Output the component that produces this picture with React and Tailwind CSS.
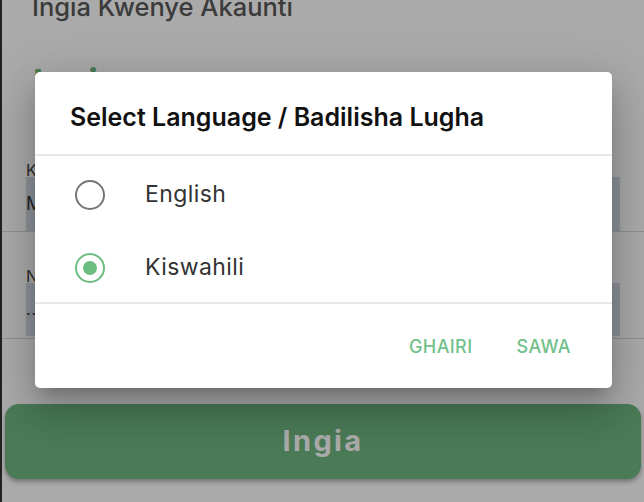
import React from "react";

const font = { fontFamily: "Inter, 'Noto Sans', sans-serif" };

function Radio({ checked }) {
  return checked ? (
    <div className="w-[30px] h-[30px] rounded-full border-[2.5px] border-[#6cbb80] flex items-center justify-center shrink-0">
      <div className="w-[14px] h-[14px] rounded-full bg-[#6cbb80]" />
    </div>
  ) : (
    <div className="w-[30px] h-[30px] rounded-full border-[2.5px] border-[#767676] shrink-0" />
  );
}

export default function App() {
  return (
    <div
      className="relative w-[644px] h-[502px] overflow-hidden flex bg-white"
      style={font}
    >
      <div className="w-[2px] bg-[#333] shrink-0" />
      <div className="flex-1 flex flex-col">
        <div className="mt-[-6px] pl-[30px] text-[25.5px] leading-none font-medium text-[#595959] whitespace-nowrap">
          Ingia Kwenye Akaunti
        </div>
        <div className="mt-[44px] pl-[31px] text-[36px] leading-none font-bold text-[#70b781]">
          Ingia
        </div>

        <div className="mt-[63px] pl-[24px] text-[16px] leading-[14px] text-[#444]">
          Kitambulisho
        </div>
        <div className="mx-[24px] h-[54px] bg-[#d6dde9] flex items-center text-[18px] text-[#333]">
          Mtumiaji01
        </div>
        <div className="h-[1px] bg-[#d8d8d8]" />

        <div className="mt-[37px] pl-[24px] text-[16px] leading-[14px] text-[#444]">
          Nenosiri
        </div>
        <div className="mx-[24px] h-[53px] bg-[#d6dde9] flex items-center text-[16px] text-[#333] tracking-[1px]">
          ..........
        </div>
        <div className="mt-[2px] h-[1px] bg-[#d8d8d8]" />

        <button className="mt-[65px] ml-[3px] mr-[3px] h-[75px] rounded-[14px] bg-[#70b781] shadow-[0_3px_4px_rgba(0,0,0,0.3)] flex items-center justify-center text-white text-[29px] font-bold tracking-[2.4px]">
          Ingia
        </button>
      </div>

      <div className="absolute inset-0 bg-[rgba(0,0,0,0.333)]" />

      <div className="absolute left-[35px] top-[72px] w-[577px] h-[316px] rounded-[5px] bg-white flex flex-col shadow-[0_11px_15px_-7px_rgba(0,0,0,0.2),0_24px_38px_3px_rgba(0,0,0,0.14),0_9px_46px_8px_rgba(0,0,0,0.12)]">
        <div className="h-[84px] shrink-0 flex items-center pl-[35px] pt-[9px] border-b-2 border-[#e8e8e8] text-[25px] font-semibold text-[#111] whitespace-nowrap">
          Select Language / Badilisha Lugha
        </div>
        <div className="flex flex-col">
          <div className="h-[73px] flex items-center pl-[40px] pt-[4px]">
            <Radio checked={false} />
            <span className="ml-[40px] text-[23px] tracking-[0.4px] text-[#333]">English</span>
          </div>
          <div className="h-[73px] flex items-center pl-[40px] pt-[4px]">
            <Radio checked />
            <span className="ml-[40px] text-[23px] tracking-[0.4px] text-[#333]">Kiswahili</span>
          </div>
        </div>
        <div className="flex-1 border-t-2 border-[#e8e8e8] flex items-center justify-end gap-[44px] pr-[41px] text-[18px] font-medium tracking-[0.4px] text-[#72c08a]">
          <span>GHAIRI</span>
          <span>SAWA</span>
        </div>
      </div>
    </div>
  );
}
